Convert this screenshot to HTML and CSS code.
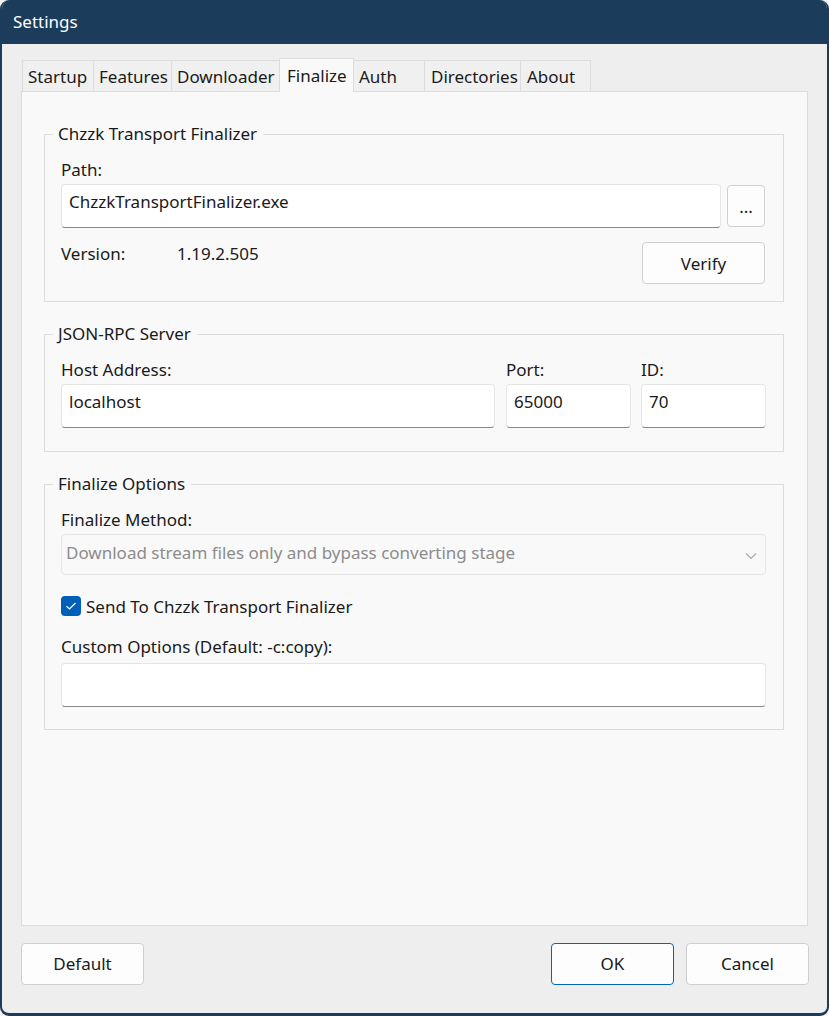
FILE: index.html
```html
<!DOCTYPE html>
<html>
<head>
<meta charset="utf-8">
<link rel="stylesheet" href="styles.css">
</head>
<body>
<div class="window">
  <div class="titlebar">Settings</div>
  <div class="content">
    <div class="tabs">
      <div class="tab t-startup">Startup</div>
      <div class="tab t-features">Features</div>
      <div class="tab t-downloader">Downloader</div>
      <div class="tab t-finalize active">Finalize</div>
      <div class="tab t-auth">Auth</div>
      <div class="tab t-directories">Directories</div>
      <div class="tab t-about">About</div>
    </div>
    <div class="panel">
      <fieldset class="group g1">
        <legend>Chzzk Transport Finalizer</legend>
        <div class="label label-first">Path:</div>
        <div class="row path-row">
          <div class="input grow">ChzzkTransportFinalizer.exe</div>
          <div class="btn btn-dots">...</div>
        </div>
        <div class="row version-row">
          <div class="version-label">Version:</div>
          <div class="version-value">1.19.2.505</div>
          <div class="btn btn-verify">Verify</div>
        </div>
      </fieldset>

      <fieldset class="group g2">
        <legend>JSON-RPC Server</legend>
        <div class="row server-row">
          <div class="col col-host">
            <div class="label label-first">Host Address:</div>
            <div class="input">localhost</div>
          </div>
          <div class="col col-port">
            <div class="label label-first">Port:</div>
            <div class="input">65000</div>
          </div>
          <div class="col col-id">
            <div class="label label-first">ID:</div>
            <div class="input">70</div>
          </div>
        </div>
      </fieldset>

      <fieldset class="group g3">
        <legend>Finalize Options</legend>
        <div class="label label-first">Finalize Method:</div>
        <div class="combo">
          <span>Download stream files only and bypass converting stage</span>
          <svg class="chev" width="12" height="8" viewBox="0 0 12 8"><path d="M1 1.5 L6 6.5 L11 1.5" fill="none" stroke="#a8a8a8" stroke-width="1.1"/></svg>
        </div>
        <div class="check-row">
          <span class="checkbox"><svg width="12" height="10" viewBox="0 0 12 10"><path d="M1.5 5.2 L4.5 8 L10.5 2" fill="none" stroke="#ffffff" stroke-width="1.2"/></svg></span>
          <span>Send To Chzzk Transport Finalizer</span>
        </div>
        <div class="label label-custom">Custom Options (Default: -c:copy):</div>
        <div class="input"></div>
      </fieldset>
    </div>
    <div class="buttons">
      <div class="btn bottom-btn">Default</div>
      <div class="spacer"></div>
      <div class="btn bottom-btn ok">OK</div>
      <div class="btn bottom-btn">Cancel</div>
    </div>
  </div>
</div>
</body>
</html>
```

FILE: styles.css
```css
* { box-sizing: border-box; }
html, body {
  margin: 0;
  padding: 0;
  background: #f3f3f3;
}
body {
  width: 829px;
  height: 1016px;
  font-family: "Noto Sans", "Open Sans", sans-serif;
  font-size: 17px;
  color: #1a1a1a;
  overflow: hidden;
}
.window {
  width: 829px;
  height: 1016px;
  border: 2px solid #1b3c5b;
  border-top: none;
  border-bottom-width: 3px;
  border-radius: 9px;
  background: #eeeeee;
  overflow: hidden;
  display: flex;
  flex-direction: column;
}
.titlebar {
  height: 44px;
  flex: none;
  background: #1b3c5b;
  color: #ffffff;
  font-size: 17px;
  line-height: 44px;
  margin: 0 -2px;
  padding-left: 13px;
}
.content {
  flex: 1;
  display: flex;
  flex-direction: column;
  padding: 14px 19px 0 19px;
}
.tabs {
  display: flex;
  align-items: flex-end;
  height: 33px;
  margin-left: 1px;
  position: relative;
  z-index: 1;
}
.tab {
  height: 31px;
  border: 1px solid #dcdcdc;
  border-bottom: none;
  border-right: none;
  background: #f0f0f0;
  padding: 0 0 0 5px;
  line-height: 31px;
  white-space: nowrap;
}
.tab.t-about { border-right: 1px solid #dcdcdc; padding-left: 6px; }
.tab.t-directories { padding-left: 6px; }
.tab.active {
  height: 34px;
  background: #f9f9f9;
  line-height: 34px;
  padding-left: 7px;
  margin-bottom: -1px;
  border-right: 1px solid #dcdcdc;
}
.tab.active + .tab { border-left: none; }
.t-startup { width: 71px; }
.t-features { width: 78px; }
.t-downloader { width: 108px; }
.t-finalize { width: 75px; }
.t-auth { width: 70px; }
.t-directories { width: 96px; }
.t-about { width: 71px; }

.panel {
  height: 835px;
  flex: none;
  background: #f9f9f9;
  border: 1px solid #dcdcdc;
  padding: 32px 23px 0 22px;
  display: flex;
  flex-direction: column;
  gap: 22px;
}
.group {
  margin: 0;
  border: 1px solid #dcdcdc;
  padding: 15px 17px 17px 16px;
  min-width: 0;
}
.group legend {
  padding: 0 6px 0 5px;
  margin-left: -8px;
  line-height: 20px;
}
.label {
  line-height: 20px;
  height: 20px;
  margin-bottom: 4px;
}
.label-first { margin-top: 1px; }
.row { display: flex; }
.input {
  height: 44px;
  background: #ffffff;
  border: 1px solid #e5e5e5;
  border-bottom: 1px solid #878787;
  border-radius: 4px;
  padding: 0 7px;
  line-height: 34px;
  white-space: nowrap;
}
.grow { flex: 1; }
.btn {
  background: #fdfdfd;
  border: 1px solid #d0d0d0;
  border-radius: 4px;
  text-align: center;
}
.path-row { gap: 6px; }
.btn-dots {
  width: 38px;
  height: 42px;
  margin-top: 1px;
  margin-right: 1px;
  line-height: 42px;
}
.version-row {
  margin-top: 14px;
  align-items: flex-start;
}
.version-label {
  width: 116px;
  line-height: 20px;
  margin-top: 2px;
}
.version-value {
  flex: 1;
  line-height: 20px;
  margin-top: 2px;
}
.btn-verify {
  width: 123px;
  height: 42px;
  line-height: 42px;
  margin-right: 1px;
}
.g2 { padding-bottom: 23px; }
.server-row { gap: 10px; }
.col-host { flex: 1; }
.col-port { width: 125px; margin-left: 1px; }
.col-id { width: 125px; }

.g3 { padding-bottom: 22px; }
.combo {
  height: 41px;
  border: 1px solid #e5e5e5;
  border-radius: 4px;
  background: #f9f9f9;
  color: #8c8c8c;
  display: flex;
  align-items: center;
  justify-content: space-between;
  padding: 0 8px 0 4px;
  line-height: 20px;
  padding-bottom: 4px;
}
.chev { margin-top: 6px; }
.check-row {
  display: flex;
  align-items: center;
  gap: 5px;
  margin-top: 21px;
  height: 20px;
}
.checkbox {
  width: 20px;
  height: 20px;
  border-radius: 4px;
  background: #005fb8;
  display: flex;
  align-items: center;
  justify-content: center;
}
.label-custom { margin-top: 21px; margin-bottom: 6px; }

.buttons {
  display: flex;
  gap: 12px;
  margin-top: 17px;
  margin-right: -1px;
}
.spacer { flex: 1; }
.bottom-btn {
  width: 123px;
  height: 42px;
  line-height: 40px;
}
.bottom-btn.ok { border-color: #0067c0; }
```
